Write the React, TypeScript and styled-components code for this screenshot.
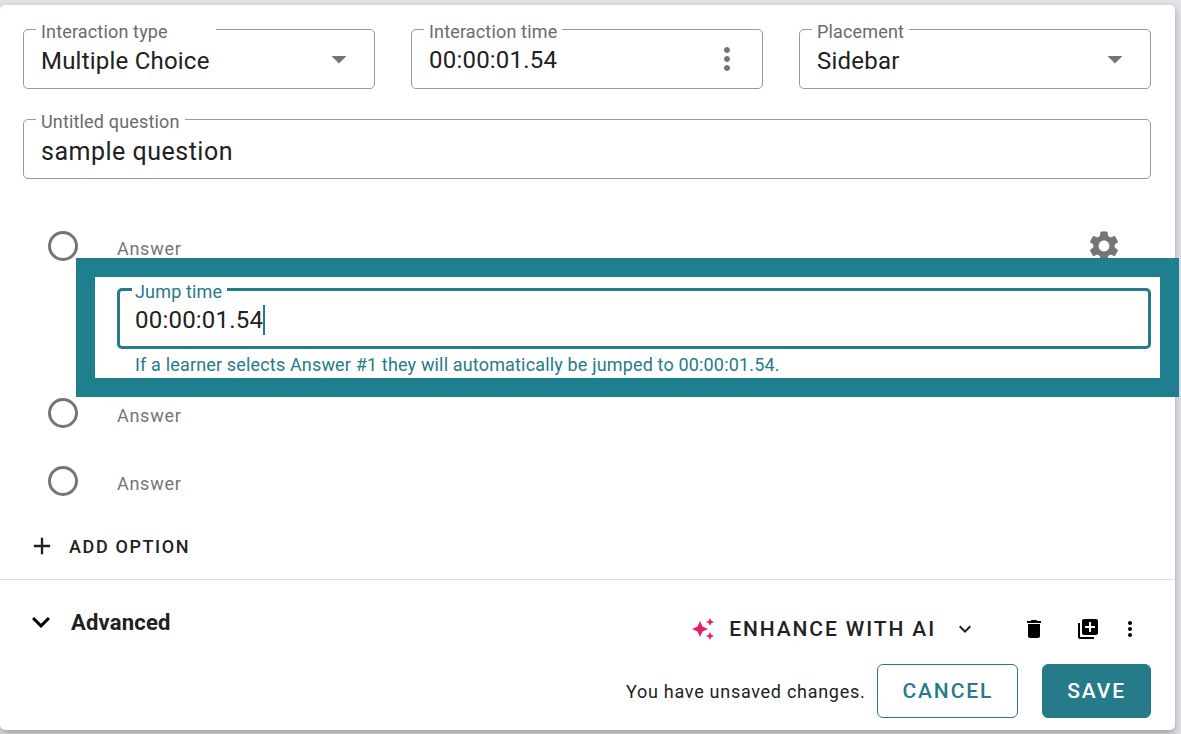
import React, { useState } from 'react';
import styled, { createGlobalStyle, css } from 'styled-components';
import {
  MdAdd,
  MdArrowDropDown,
  MdAutoAwesome,
  MdDelete,
  MdExpandMore,
  MdLibraryAdd,
  MdMoreVert,
  MdSettings,
} from 'react-icons/md';

const teal = '#257b89';
const ink = '#212121';
const grey = '#757575';

const tracking = {
  body: '0.009em',
  wide: '0.04em',
  button: '0.09em',
};

const GlobalStyle = createGlobalStyle`
  *, *::before, *::after { box-sizing: border-box; }
  body {
    margin: 0;
    background: #e2e3e8;
    color: ${ink};
    font-family: Roboto, "Liberation Sans", sans-serif;
  }
  button, input, select { font: inherit; color: inherit; margin: 0; }
`;

const Page = styled.div`
  padding: 5px 6px 4px 0;
  overflow: hidden;
`;

const Card = styled.form`
  background: #fff;
  border-radius: 5px;
  box-shadow: 0 4px 8px rgba(0, 0, 0, 0.3);
`;

const Editor = styled.section`
  padding: 24px 24px 12px 23px;
  border-bottom: 1px solid #dedede;
`;

const FieldRow = styled.div`
  display: grid;
  grid-template-columns: repeat(3, minmax(0, 1fr));
  gap: 36px;
  margin-bottom: 30px;
`;

const Field = styled.div<{ $active?: boolean }>`
  position: relative;
  display: flex;
  align-items: center;
  height: 60px;
  padding: 0 17px;
  border: 1px solid #999;
  border-radius: 5px;
  ${(p) =>
    p.$active &&
    css`
      height: 61px;
      padding: 2px 15px 0;
      border: 3px solid ${teal};
    `}
`;

const FieldLabel = styled.label<{ $active?: boolean; $wide?: boolean }>`
  position: absolute;
  top: -8px;
  left: 12px;
  min-width: ${(p) => (p.$wide ? '180px' : '0')};
  padding: 0 5px;
  background: #fff;
  color: ${(p) => (p.$active ? teal : '#6b6b6b')};
  font-size: 18px;
  line-height: 20px;
  letter-spacing: ${tracking.body};
  ${(p) =>
    p.$active &&
    css`
      top: -9px;
      padding-left: 3px;
    `}
`;

const valueText = css`
  min-width: 0;
  padding: 0;
  border: 0;
  outline: 0;
  background: none;
  font-size: 24px;
  line-height: 32px;
  letter-spacing: ${tracking.body};
`;

const Select = styled.select`
  ${valueText}
  flex: 1;
  padding-top: 4px;
  appearance: none;
`;

const TextValue = styled.input<{ $question?: boolean }>`
  ${valueText}
  flex: 1;
  padding-top: 2px;
  ${(p) =>
    p.$question &&
    css`
      padding-top: 6px;
      font-size: 25px;
      letter-spacing: 0.02em;
    `}
`;

const JumpValue = styled.input`
  ${valueText}
  field-sizing: content;
  caret-color: transparent;
`;

const Caret = styled.span`
  width: 2px;
  height: 30px;
  background: ${teal};
`;

const IconButton = styled.button`
  display: flex;
  padding: 0;
  border: 0;
  background: none;
  color: inherit;
`;

const FieldIcon = styled.span`
  display: flex;
  color: ${grey};
  pointer-events: none;
`;

const FieldButton = styled(IconButton)`
  color: ${grey};
`;

const Answers = styled.ul`
  list-style: none;
  margin: 33px 0 10px;
  padding: 0;
`;

const AnswerRow = styled.div`
  display: flex;
  align-items: center;
  height: 68px;
  padding: 0 29px 0 25px;
`;

const Radio = styled.input`
  appearance: none;
  flex: none;
  width: 30px;
  height: 30px;
  border: 3px solid ${grey};
  border-radius: 50%;
`;

const AnswerText = styled.input`
  flex: 1;
  min-width: 0;
  padding: 6px 0 0;
  margin-left: 39px;
  border: 0;
  outline: 0;
  background: none;
  font-size: 18px;
  line-height: 24px;
  letter-spacing: ${tracking.wide};
  &::placeholder { color: ${grey}; opacity: 1; }
`;

const Jump = styled.div`
  position: relative;
  margin-left: 94px;
  padding: 8px 0 2px;
`;

const Helper = styled.p`
  margin: 4px 0 0;
  padding: 0 18px;
  color: ${teal};
  font-size: 18px;
  line-height: 24px;
  letter-spacing: ${tracking.body};
`;

const Highlight = styled.div`
  position: absolute;
  inset: -22px -28px -18px -41px;
  border: 19px solid #207f8e;
  pointer-events: none;
`;

const AddOption = styled.button`
  display: flex;
  align-items: center;
  gap: 13px;
  height: 42px;
  padding: 0 5px;
  border: 0;
  background: none;
  font-size: 18px;
  font-weight: 500;
  letter-spacing: ${tracking.button};
`;

const Footer = styled.footer`
  padding: 24px 24px 12px 23px;
`;

const ToolRow = styled.div`
  display: flex;
  justify-content: space-between;
  margin-bottom: 10px;
`;

const Advanced = styled.button`
  display: flex;
  align-items: center;
  gap: 12px;
  height: 36px;
  padding: 0;
  border: 0;
  background: none;
  font-size: 22px;
  font-weight: 700;
  letter-spacing: ${tracking.body};
  svg { color: #000; }
`;

const Tools = styled.div`
  display: flex;
  align-items: center;
  height: 50px;
  padding-right: 9px;
  color: #000;
`;

const Enhance = styled.button`
  display: flex;
  align-items: center;
  padding: 0;
  margin-right: 45px;
  border: 0;
  background: none;
  color: ${ink};
  font-size: 21px;
  font-weight: 500;
  letter-spacing: ${tracking.button};
`;

const EnhanceText = styled.span`
  margin: 0 17px 0 14px;
`;

const ToolGroup = styled.div`
  display: flex;
  gap: 30px;
`;

const MoreButton = styled(IconButton)`
  margin-left: 18px;
`;

const Actions = styled.div`
  display: flex;
  align-items: center;
  justify-content: flex-end;
`;

const Status = styled.span`
  margin-right: 12px;
  font-size: 18px;
  letter-spacing: ${tracking.wide};
`;

const ActionButton = styled.button<{ $primary?: boolean }>`
  height: 54px;
  padding: 0 24px;
  border: 1px solid ${teal};
  border-radius: 6px;
  background: ${(p) => (p.$primary ? teal : '#fff')};
  color: ${(p) => (p.$primary ? '#fff' : teal)};
  font-size: 21px;
  font-weight: 500;
  letter-spacing: ${tracking.button};
  & + & { margin-left: 24px; }
`;

const answers = [1, 2, 3];

export default function App() {
  const [jump, setJump] = useState('00:00:01.54');

  return (
    <>
      <GlobalStyle />
      <Page>
        <Card onSubmit={(e) => e.preventDefault()}>
          <Editor>
            <FieldRow>
              <Field>
                <FieldLabel htmlFor="type" $wide>Interaction type</FieldLabel>
                <Select id="type"><option>Multiple Choice</option></Select>
                <FieldIcon><MdArrowDropDown size={36} /></FieldIcon>
              </Field>
              <Field>
                <FieldLabel htmlFor="time">Interaction time</FieldLabel>
                <TextValue id="time" defaultValue="00:00:01.54" />
                <FieldButton type="button" aria-label="Time options"><MdMoreVert size={36} /></FieldButton>
              </Field>
              <Field>
                <FieldLabel htmlFor="placement">Placement</FieldLabel>
                <Select id="placement"><option>Sidebar</option></Select>
                <FieldIcon><MdArrowDropDown size={36} /></FieldIcon>
              </Field>
            </FieldRow>
            <Field>
              <FieldLabel htmlFor="question">Untitled question</FieldLabel>
              <TextValue id="question" defaultValue="sample question" $question />
            </Field>

            <Answers>
              {answers.map((n) => (
                <li key={n}>
                  <AnswerRow>
                    <Radio type="radio" name="correct" aria-label={`Answer ${n} is correct`} />
                    <AnswerText placeholder="Answer" aria-label={`Answer ${n}`} />
                    {n === 1 && (
                      <FieldButton type="button" aria-label="Answer settings"><MdSettings size={36} /></FieldButton>
                    )}
                  </AnswerRow>
                  {n === 1 && (
                    <Jump>
                      <Field $active>
                        <FieldLabel htmlFor="jump" $active>Jump time</FieldLabel>
                        <JumpValue id="jump" value={jump} onChange={(e) => setJump(e.target.value)} />
                        <Caret />
                      </Field>
                      <Helper>If a learner selects Answer #1 they will automatically be jumped to {jump}.</Helper>
                      <Highlight />
                    </Jump>
                  )}
                </li>
              ))}
            </Answers>
            <AddOption type="button"><MdAdd size={28} />ADD OPTION</AddOption>
          </Editor>

          <Footer>
            <ToolRow>
              <Advanced type="button"><MdExpandMore size={36} />Advanced</Advanced>
              <Tools>
                <Enhance type="button">
                  <MdAutoAwesome size={24} color="#e91e63" />
                  <EnhanceText>ENHANCE WITH AI</EnhanceText>
                  <MdExpandMore size={24} />
                </Enhance>
                <ToolGroup>
                  <IconButton type="button" aria-label="Delete"><MdDelete size={24} /></IconButton>
                  <IconButton type="button" aria-label="Duplicate"><MdLibraryAdd size={24} /></IconButton>
                </ToolGroup>
                <MoreButton type="button" aria-label="More"><MdMoreVert size={24} /></MoreButton>
              </Tools>
            </ToolRow>
            <Actions>
              <Status>You have unsaved changes.</Status>
              <ActionButton type="button">CANCEL</ActionButton>
              <ActionButton type="submit" $primary>SAVE</ActionButton>
            </Actions>
          </Footer>
        </Card>
      </Page>
    </>
  );
}
